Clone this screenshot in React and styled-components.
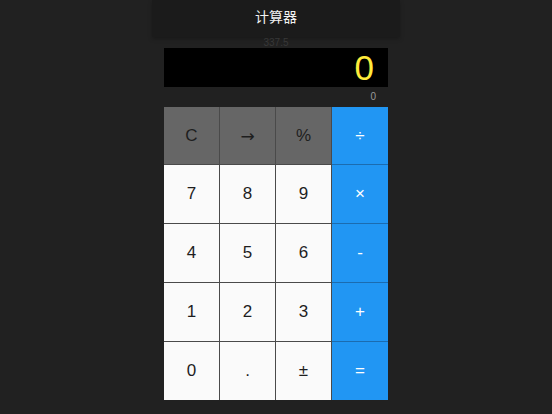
import React from "react";
import styled, { createGlobalStyle } from "styled-components";

const Global = createGlobalStyle`
  html, body {
    margin: 0;
    padding: 0;
    background: #212121;
    font-family: "Noto Sans CJK SC", "Liberation Sans", sans-serif;
  }
`;

const Page = styled.div`
  width: 552px;
  height: 414px;
  display: flex;
  justify-content: center;
  overflow: hidden;
`;

const Column = styled.div`
  width: 248px;
  display: flex;
  flex-direction: column;
`;

const Header = styled.div`
  height: 37px;
  box-sizing: border-box;
  padding-bottom: 5px;
  background: #1b1b1b;
  box-shadow: 0 2px 4px rgba(0, 0, 0, 0.25);
  display: flex;
  align-items: center;
  justify-content: center;
  color: #f2f2f2;
  font-size: 14px;
`;

const Body = styled.div`
  padding: 0 12px;
  display: flex;
  flex-direction: column;
`;

const History = styled.div`
  height: 11px;
  line-height: 11px;
  text-align: center;
  font-family: "Liberation Sans", sans-serif;
  font-size: 10px;
  color: #383838;
`;

const Display = styled.div`
  height: 39px;
  background: #000;
  color: #ffeb3b;
  font-family: "Liberation Sans", sans-serif;
  font-size: 35px;
  display: flex;
  align-items: center;
  justify-content: flex-end;
  padding-right: 14px;
`;

const Result = styled.div`
  height: 20px;
  line-height: 20px;
  text-align: right;
  padding-right: 12px;
  font-family: "Liberation Sans", sans-serif;
  font-size: 10px;
  color: #9a9a9a;
`;

const Keypad = styled.div`
  display: grid;
  grid-template-columns: repeat(4, 56px);
  grid-template-rows: 58px 59px 59px 59px 58px;
`;

const colors = {
  func: "#666666",
  num: "#fafafa",
  op: "#2196f3",
};

const Key = styled.div`
  background: ${(p) => colors[p.kind]};
  color: ${(p) => (p.kind === "op" ? "#ffffff" : "#1e1e1e")};
  border-right: 1px solid ${(p) => (p.kind === "op" ? "#1b6cb0" : "#4a4a4a")};
  border-bottom: 1px solid ${(p) => (p.kind === "op" ? "#1b6cb0" : "#4a4a4a")};
  display: flex;
  align-items: center;
  justify-content: center;
  font-family: ${(p) =>
    p.symbol ? '"DejaVu Sans", sans-serif' : '"Liberation Sans", sans-serif'};
  font-size: 17px;
  &:nth-child(4n) {
    border-right: none;
  }
  &:nth-last-child(-n + 4) {
    border-bottom: none;
  }
`;

const keys = [
  ["C", "func"], ["→", "func", true], ["%", "func"], ["÷", "op"],
  ["7", "num"], ["8", "num"], ["9", "num"], ["×", "op"],
  ["4", "num"], ["5", "num"], ["6", "num"], ["-", "op"],
  ["1", "num"], ["2", "num"], ["3", "num"], ["+", "op"],
  ["0", "num"], [".", "num"], ["±", "num"], ["=", "op"],
];

export default function App() {
  return (
    <Page>
      <Global />
      <Column>
        <Header>计算器</Header>
        <Body>
          <History>337.5</History>
          <Display>0</Display>
          <Result>0</Result>
          <Keypad>
            {keys.map(([label, kind, symbol]) => (
              <Key key={label} kind={kind} symbol={symbol}>
                {label}
              </Key>
            ))}
          </Keypad>
        </Body>
      </Column>
    </Page>
  );
}
